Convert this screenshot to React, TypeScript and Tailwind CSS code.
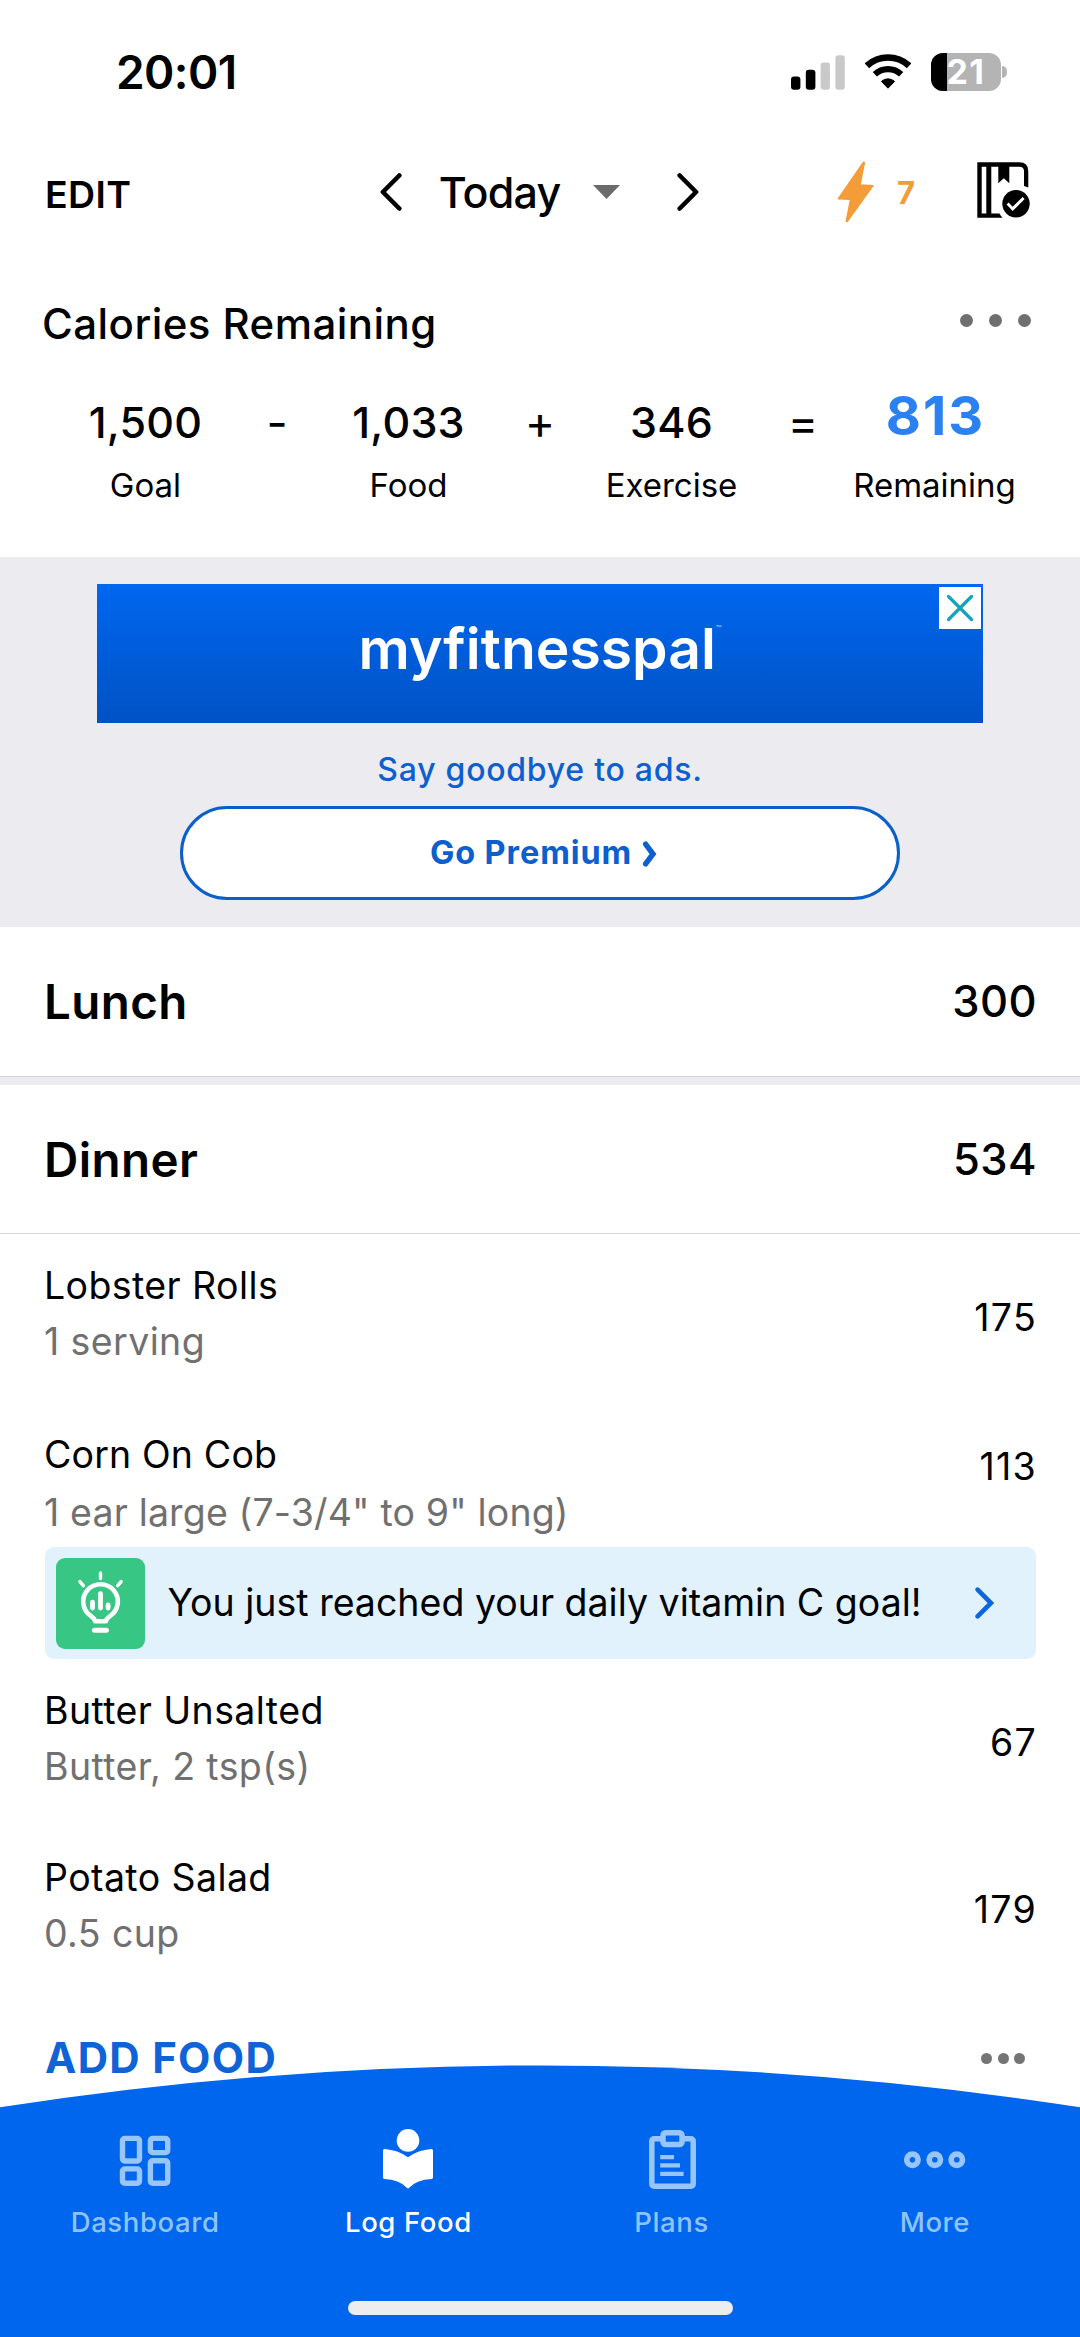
import type { ReactNode } from 'react';
import clsx from 'clsx';

interface FoodEntry {
  name: string;
  serving: string;
  calories: number;
  insight?: string;
}

const dinner: FoodEntry[] = [
  { name: 'Lobster Rolls', serving: '1 serving', calories: 175 },
  {
    name: 'Corn On Cob',
    serving: '1 ear large (7-3/4" to 9" long)',
    calories: 113,
    insight: 'You just reached your daily vitamin C goal!',
  },
  { name: 'Butter Unsalted', serving: 'Butter, 2 tsp(s)', calories: 67 },
  { name: 'Potato Salad', serving: '0.5 cup', calories: 179 },
];

/* ---------- Icons ---------- */

function SignalIcon() {
  return (
    <svg width="54" height="35" viewBox="0 0 54 35">
      <rect x="0" y="21.5" width="9.4" height="13.2" rx="3" fill="#000" />
      <rect x="14.8" y="14.8" width="9.6" height="19.9" rx="3" fill="#000" />
      <rect x="29.6" y="7.5" width="9.4" height="27.2" rx="3" fill="#c9c9c9" />
      <rect x="44.4" y="0.3" width="9.4" height="34.4" rx="3" fill="#c9c9c9" />
    </svg>
  );
}

function WifiIcon() {
  return (
    <svg width="46" height="36" viewBox="0 0 46 36" fill="none" stroke="#000">
      <path d="M1.9 11.8A31 31 0 0 1 44.1 11.8" strokeWidth="6.6" />
      <path d="M9.8 20.3A19.4 19.4 0 0 1 36.2 20.3" strokeWidth="6.2" />
      <path d="M23 34.2 16.4 27.4A9.8 9.8 0 0 1 29.6 27.4Z" fill="#000" strokeWidth="1" strokeLinejoin="round" />
    </svg>
  );
}

function Battery({ level }: { level: number }) {
  return (
    <div className="flex items-center gap-px">
      <div className="flex h-[38px] w-[70px] items-center rounded-[12px] bg-[#b4b4b4]">
        <div className="h-full w-[15.5px] shrink-0 rounded-l-[12px] bg-black" />
        <span className="text-[34px] leading-none font-bold tracking-[1.4px] text-white">{level}</span>
      </div>
      <div className="h-[12px] w-[5px] rounded-r-full bg-[#b4b4b4]" />
    </div>
  );
}

function ChevronIcon({ flip = false }: { flip?: boolean }) {
  return (
    <svg
      width="22"
      height="38"
      viewBox="0 0 22 38"
      fill="none"
      stroke="#000"
      strokeWidth="4.6"
      strokeLinecap="round"
      strokeLinejoin="round"
      className={clsx(flip && '-scale-x-100')}
    >
      <path d="M19.3 2.5 2.9 19 19.3 35.5" />
    </svg>
  );
}

function BoltIcon() {
  return (
    <svg width="37" height="62" viewBox="0 0 37 62" fill="#f39c38" stroke="#f39c38" strokeWidth="1.4" strokeLinejoin="round">
      <path d="M26.5 1.2 27.4 1.6 23 24 36 24.6 10.2 60.6 9.2 60.4 13.6 38.2 1.2 37.8Z" />
    </svg>
  );
}

function DiaryIcon() {
  return (
    <svg width="54" height="56" viewBox="0 0 54 56">
      <path
        fill="#000"
        fillRule="evenodd"
        d="M.3.3H42.3Q51.3.3 51.3 9.3V25.6L47 24V9.2Q47 4.7 42.5 4.7H32.3V21.3L26.8 16.3 21.3 21.3V4.7H14.3V51.6H22.4Q23.6 53.8 25.6 55.8H.3ZM4.7 4.7V51.6H9.3V4.7Z"
      />
      <circle cx="39" cy="41.7" r="13.7" fill="#000" />
      <path d="M30.6 41.6 35.7 46.9 46.6 36" fill="none" stroke="#fff" strokeWidth="2.9" />
    </svg>
  );
}

function BulbIcon() {
  return (
    <svg width="89" height="91" viewBox="0 0 89 91" fill="none" stroke="#fff" strokeLinecap="round" strokeLinejoin="round">
      <path d="M39 63.3C39 60.4 36.6 59.2 34.5 57.7A17.3 17.3 0 1 1 54.5 57.7C52.4 59.2 50 60.4 50 63.3Z" strokeWidth="4.6" />
      <path d="M38.4 72.2H50.4" strokeWidth="5" />
      <path d="M36.5 44.2V50M44.5 35.6V50M52.1 47V50" strokeWidth="4.8" />
      <path d="M44.5 15V20.6M23.9 23.6 27.3 27.6M65.1 23.6 61.7 27.6" strokeWidth="3.4" />
    </svg>
  );
}

function DashboardIcon() {
  return (
    <svg width="64" height="64" viewBox="0 0 64 64" fill="none" stroke="#99c5fd" strokeWidth="5.4">
      <rect x="9.5" y="10.4" width="17" height="22.6" rx="2.2" />
      <rect x="37.4" y="10.4" width="17.3" height="14.2" rx="2.2" />
      <rect x="9.5" y="40.9" width="17" height="14.3" rx="2.2" />
      <rect x="37.4" y="32.8" width="17.3" height="22.4" rx="2.2" />
    </svg>
  );
}

function LogFoodIcon() {
  return (
    <svg width="64" height="64" viewBox="0 0 64 64" fill="#fff">
      <circle cx="32" cy="12.4" r="11.3" />
      <path d="M7 22.6Q7 20.9 8.8 21 22 22 32 29.3 42 22 55.2 21 57 20.9 57 22.6V49.6Q57 51 55.4 51.1 41 51.6 33.2 59.8 32 60.9 30.8 59.8 23 51.6 8.6 51.1 7 51 7 49.6Z" />
    </svg>
  );
}

function PlansIcon() {
  return (
    <svg width="64" height="64" viewBox="0 0 64 64" fill="none" stroke="#99c5fd" strokeWidth="5.5">
      <rect x="11.8" y="10.7" width="41.4" height="47.6" rx="2.2" />
      <rect x="23" y="4.8" width="19" height="11.6" rx="2.4" fill="#0066ee" />
      <path d="M20.2 29.2H34M20.2 37.4H40M20.2 45.8H43.6" strokeWidth="4.2" />
    </svg>
  );
}

function MoreIcon() {
  return (
    <svg width="64" height="64" viewBox="0 0 64 64" fill="none" stroke="#99c5fd" strokeWidth="5.7">
      <circle cx="9.4" cy="31.7" r="5.65" />
      <circle cx="31.8" cy="31.7" r="5.65" />
      <circle cx="53.8" cy="31.7" r="5.65" />
    </svg>
  );
}

/* ---------- Sections ---------- */

function StatusBar() {
  return (
    <div className="flex h-[144px] items-center justify-between pr-[73px] pl-[116px]">
      <span className="text-[46px] leading-none font-semibold tracking-[-0.58px]">20:01</span>
      <div className="flex items-center gap-5">
        <SignalIcon />
        <WifiIcon />
        <Battery level={21} />
      </div>
    </div>
  );
}

function DateNav() {
  return (
    <div className="grid h-[96px] grid-cols-[1fr_auto_1fr] items-center pr-[46px] pl-[45px]">
      <span className="pt-[5px] text-[37.5px] leading-none font-semibold tracking-[0.38px]">EDIT</span>
      <div className="flex items-center">
        <ChevronIcon />
        <span className="ml-[37px] text-[43px] leading-none font-medium tracking-[-0.8px]">Today</span>
        <svg width="27" height="14" viewBox="0 0 27 14" className="ml-[33px]">
          <path d="M0 0H27L13.5 14Z" fill="#6b6b6b" />
        </svg>
        <div className="ml-[57px] flex">
          <ChevronIcon flip />
        </div>
      </div>
      <div className="mr-[3px] flex items-center justify-end">
        <BoltIcon />
        <span className="mr-[62px] ml-[23px] text-[31px] leading-none font-bold text-[#f39c38]">7</span>
        <div className="-mt-1 flex">
          <DiaryIcon />
        </div>
      </div>
    </div>
  );
}

function Total({ value, label, highlight = false }: { value: string; label: string; highlight?: boolean }) {
  return (
    <div className="flex w-[180px] flex-col items-center">
      <div
        className={clsx(
          'flex h-[68px] items-center leading-none',
          highlight
            ? 'pb-[13px] pl-[2px] text-[54px] font-bold tracking-[2px] text-[#2b80f2]'
            : 'text-[43px] font-medium tracking-[0.2px]',
        )}
      >
        {value}
      </div>
      <div className="mt-2 text-[33px] leading-[42px]">{label}</div>
    </div>
  );
}

function Operator({ children }: { children: ReactNode }) {
  return (
    <div className="flex h-[68px] w-[83px] items-center justify-center text-[46px] leading-none">{children}</div>
  );
}

function CaloriesSummary() {
  return (
    <section className="h-[317px] pt-[40px]">
      <div className="flex h-[88px] items-center justify-between pr-[49px] pl-[42px]">
        <h1 className="text-[42px] leading-none font-medium tracking-[0.45px]">Calories Remaining</h1>
        <div className="mb-2 flex gap-4">
          <div className="size-[13px] rounded-full bg-[#6f6f6f]" />
          <div className="size-[13px] rounded-full bg-[#6f6f6f]" />
          <div className="size-[13px] rounded-full bg-[#6f6f6f]" />
        </div>
      </div>
      <div className="mt-5 flex justify-center">
        <Total value="1,500" label="Goal" />
        <Operator>-</Operator>
        <Total value="1,033" label="Food" />
        <Operator>+</Operator>
        <Total value="346" label="Exercise" />
        <Operator>=</Operator>
        <Total value="813" label="Remaining" highlight />
      </div>
    </section>
  );
}

function AdBanner() {
  return (
    <section className="flex h-[370px] flex-col items-center bg-[#ebebf0] pt-[27px]">
      <div className="relative flex h-[139px] w-[886px] items-center justify-center bg-linear-to-b from-[#0067f0] to-[#0052c4] pb-[11px]">
        <div className="flex items-start text-white">
          <span className="text-[57px] leading-none font-semibold">myfitnesspal</span>
          <span className="mt-1 text-[9px] leading-none opacity-70">™</span>
        </div>
        <button className="absolute top-[3px] right-[2px] flex size-[42px] items-center justify-center bg-white">
          <svg width="28" height="28" viewBox="0 0 28 28" stroke="#14a3b8" strokeWidth="3.2" strokeLinecap="round">
            <path d="M2.5 2.5 25.5 25.5M25.5 2.5 2.5 25.5" />
          </svg>
        </button>
      </div>
      <p className="flex h-[83px] items-center pt-[11px] text-[32px] leading-none font-medium tracking-[0.75px] text-[#0b5fce]">
        Say goodbye to ads.
      </p>
      <button className="flex h-[94px] w-[720px] items-center justify-center gap-[10px] rounded-full border-[3px] border-[#0b5fc8] bg-white pl-[7px] text-[#0b5fce]">
        <span className="text-[32.5px] leading-none font-bold tracking-[0.9px]">Go Premium</span>
        <svg width="15" height="26" viewBox="0 0 15 26" fill="none" stroke="currentColor" strokeWidth="5.4" strokeLinecap="round" className="mt-[2px]">
          <path d="M3.6 3.2 11 13 3.6 22.8" />
        </svg>
      </button>
    </section>
  );
}

function MealHeader({ title, calories }: { title: string; calories: number }) {
  return (
    <div className="flex h-[149px] items-center justify-between pr-[43px] pl-[44px]">
      <h2 className="text-[47.5px] leading-none font-semibold tracking-[0.4px]">{title}</h2>
      <span className="text-[43.5px] leading-none font-medium tracking-[0.4px]">{calories}</span>
    </div>
  );
}

function InsightCard({ text }: { text: string }) {
  return (
    <div className="mx-[44.5px] flex h-[112px] items-center rounded-[9px] bg-[#e1f2fd] pr-[42px] pl-[11px]">
      <div className="rounded-[9px] bg-[#37c684]">
        <BulbIcon />
      </div>
      <span className="ml-[23px] flex-1 text-[37.5px] leading-none whitespace-nowrap">{text}</span>
      <svg width="19" height="32" viewBox="0 0 19 32" fill="none" stroke="#0c67dd" strokeWidth="4.6" strokeLinecap="round">
        <path d="M2.6 2.6 16 16 2.6 29.4" />
      </svg>
    </div>
  );
}

function FoodRow({ entry }: { entry: FoodEntry }) {
  return (
    <>
      <div className={clsx('flex items-center justify-between pr-[43px] pl-[44px] text-[37.5px]', entry.insight ? 'h-[146px]' : 'h-[167px]')}>
        <div className={clsx(entry.insight ? 'pt-[19px] leading-[58px] tracking-[0.15px]' : 'pb-2 leading-[56px] tracking-[0.4px]')}>
          <p>{entry.name}</p>
          <p className="text-[#707070]">{entry.serving}</p>
        </div>
        <span className={clsx('leading-none tracking-[1.3px]', entry.insight && 'pb-[15px]')}>{entry.calories}</span>
      </div>
      {entry.insight && <InsightCard text={entry.insight} />}
    </>
  );
}

function Tab({ icon, label, active = false }: { icon: ReactNode; label: string; active?: boolean }) {
  return (
    <div className={clsx('flex flex-col items-center', active ? 'text-white' : 'text-[#8fc3fb]')}>
      {icon}
      <span className="mt-[10px] text-[27.5px] leading-[40px] font-medium tracking-[0.6px]">{label}</span>
    </div>
  );
}

function TabBar() {
  return (
    <nav className="absolute inset-x-0 bottom-0 h-[272px]">
      {/* Curved top edge */}
      <svg width="1080" height="272" viewBox="0 0 1080 272" className="absolute inset-0">
        <path d="M0 42.3Q540 -41.5 1080 42.3V272H0Z" fill="#0066ee" />
      </svg>
      <div className="relative flex flex-col items-center pt-[63px]">
        <div className="grid w-[1053px] grid-cols-4">
          <Tab icon={<DashboardIcon />} label="Dashboard" />
          <Tab icon={<LogFoodIcon />} label="Log Food" active />
          <Tab icon={<PlansIcon />} label="Plans" />
          <Tab icon={<MoreIcon />} label="More" />
        </div>
        <div className="mt-[59px] h-[14px] w-[385px] rounded-full bg-[#ebedef]" />
      </div>
    </nav>
  );
}

export default function App() {
  return (
    <div className="relative h-[2337px] w-[1080px] overflow-hidden bg-white font-['Inter',sans-serif] text-black">
      <StatusBar />
      <DateNav />
      <CaloriesSummary />
      <AdBanner />

      <MealHeader title="Lunch" calories={300} />
      <div className="h-[9px] border-t border-[#d3d3d8] bg-[#ebebf0]" />

      <MealHeader title="Dinner" calories={534} />
      <div className="-mt-px h-px bg-[#d8d8da]" />
      {dinner.map((entry) => (
        <FoodRow key={entry.name} entry={entry} />
      ))}

      <div className="flex h-[130px] items-center justify-between pr-[55px] pl-[45px]">
        <span className="text-[42px] leading-none font-bold tracking-[1.3px] text-[#0f63d6]">ADD FOOD</span>
        <div className="flex gap-[5.5px]">
          <div className="size-[11px] rounded-full bg-[#757575]" />
          <div className="size-[11px] rounded-full bg-[#757575]" />
          <div className="size-[11px] rounded-full bg-[#757575]" />
        </div>
      </div>

      <TabBar />
    </div>
  );
}
